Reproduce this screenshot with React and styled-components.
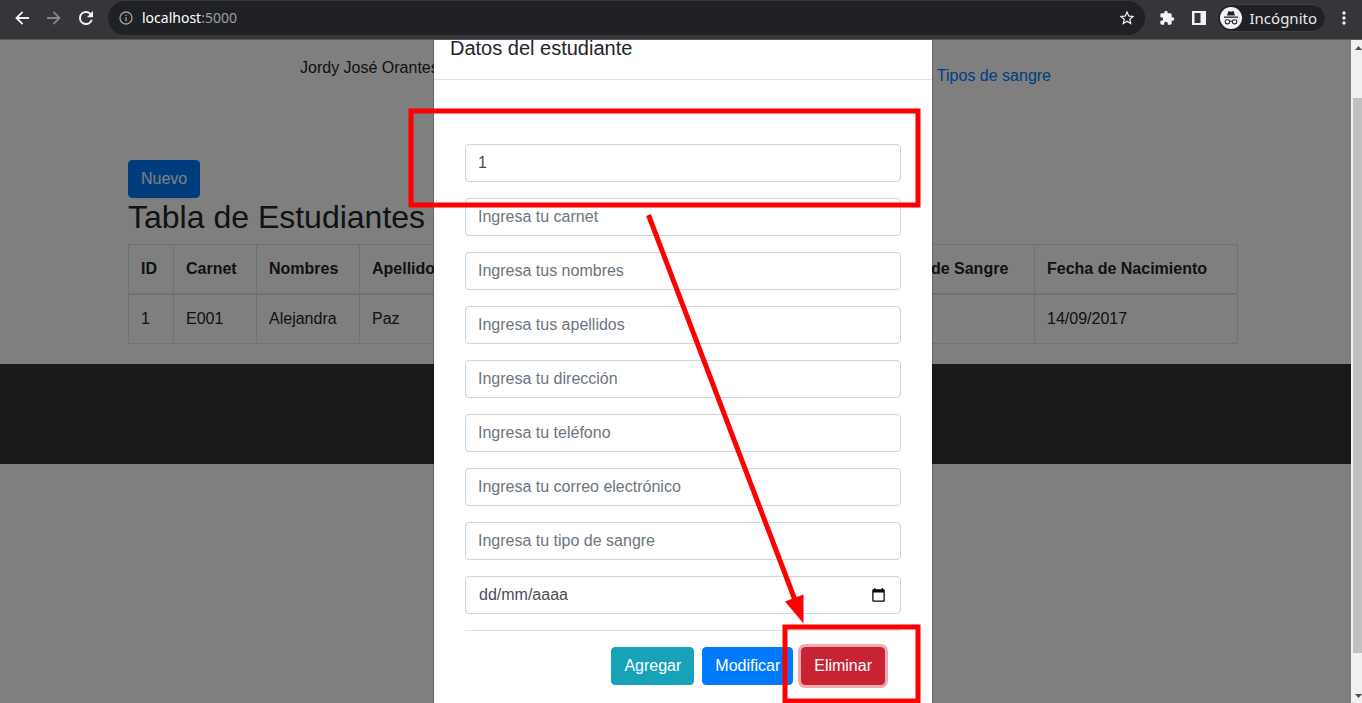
import React from "react";
import styled, { createGlobalStyle, css } from "styled-components";

const GlobalStyle = createGlobalStyle`
  *, *::before, *::after { box-sizing: border-box; }
  body {
    margin: 0;
    font: 400 16px/24px "Liberation Sans", Arial, sans-serif;
    color: #212529;
    background: #fff;
  }
  button, input { font: inherit; margin: 0; }
`;

const Browser = styled.div`
  display: flex;
  flex-direction: column;
  height: 100vh;
  overflow: hidden;
`;

const Toolbar = styled.header`
  display: flex;
  align-items: center;
  flex: none;
  height: 40px;
  padding: 0 8px 4px 12px;
  gap: 8px;
  background: #35363a;
  border-bottom: 1px solid #5b5c60;
  font-family: "Noto Sans", sans-serif;
`;

const IconButton = styled.button`
  display: flex;
  align-items: center;
  justify-content: center;
  flex: none;
  width: 20px;
  height: 20px;
  padding: 0;
  border: 0;
  background: none;
  color: ${(p) => (p.$dim ? "#85868a" : "#f1f3f4")};
`;

const ActionGroup = styled.div`
  display: flex;
  align-items: center;
  gap: 12px;
`;

const AddressBar = styled.div`
  display: flex;
  flex: 1;
  align-items: center;
  gap: 6px;
  height: 34px;
  margin: 0 4px;
  padding: 0 8px;
  border-radius: 17px;
  background: #202124;
  font-size: 14px;
`;

const SiteInfoButton = styled(IconButton)`
  color: #9aa0a6;
`;

const Url = styled.span`
  flex: 1;
  color: #fff;
  span { color: #9aa0a6; }
`;

const Profile = styled.button`
  display: flex;
  align-items: center;
  gap: 8px;
  height: 28px;
  padding: 0 8px 0 2px;
  border: 1px solid #3f4044;
  border-radius: 14px;
  background: #202124;
  color: #e8eaed;
  font-size: 15px;
`;

const Viewport = styled.div`
  position: relative;
  flex: 1;
  min-height: 0;
  margin-right: -4px;
  overflow: hidden;
`;

const Container = styled.div`
  max-width: 1140px;
  margin: 0 auto;
  padding: 0 15px;
`;

const Masthead = styled.div`
  display: flex;
  justify-content: space-between;
  height: 120px;
  padding: 16px 187px 0 172px;
`;

const NavLink = styled.a`
  padding-top: 8px;
  color: #007bff;
  text-decoration: none;
`;

const tones = {
  primary: "#007bff",
  info: "#17a2b8",
  danger: "#c82333",
};

const Button = styled.button`
  display: block;
  height: 38px;
  padding: 0 12px;
  border: 1px solid ${(p) => tones[p.$tone]};
  border-radius: 4px;
  background: ${(p) => tones[p.$tone]};
  color: #fff;
  ${(p) => p.$focused && css`box-shadow: 0 0 0 3px rgba(225, 83, 97, 0.5);`}
`;

const Heading = styled.h2`
  margin: 0 0 8px;
  font-size: 32px;
  line-height: 38px;
  font-weight: 500;
`;

const StudentTable = styled.table`
  width: 100%;
  table-layout: fixed;
  border-collapse: collapse;
  border: 1px solid #dee2e6;
  white-space: nowrap;

  th, td {
    padding: 12px;
    border: 1px solid #dee2e6;
    text-align: left;
    overflow: hidden;
  }
  thead th { border-bottom-width: 2px; }
`;

const Column = styled.col`
  width: ${(p) => (p.$width ? `${p.$width}px` : "auto")};
`;

const PageFooter = styled.footer`
  height: 100px;
  margin-top: 20px;
  background: #333;
`;

const Backdrop = styled.div`
  position: absolute;
  inset: 0;
  display: flex;
  justify-content: center;
  background: rgba(0, 0, 0, 0.5);
`;

const Modal = styled.div`
  position: relative;
  width: 500px;
  min-height: 100%;
  border: 1px solid rgba(0, 0, 0, 0.2);
  border-width: 0 1px;
  background: #fff;
  background-clip: padding-box;
`;

const ModalTitle = styled.h5`
  margin: 0;
  padding: 0 16px 23px;
  border-bottom: 1px solid #dee2e6;
  font-size: 20px;
  line-height: 16px;
  font-weight: 500;
`;

const Form = styled.form`
  display: flex;
  flex-direction: column;
  gap: 16px;
  padding: 64px 31px 16px;
`;

const fieldBox = css`
  width: 100%;
  height: 38px;
  padding: 6px 12px;
  border: 1px solid #ced4da;
  border-radius: 4px;
  background: #fff;
  color: #495057;
`;

const Field = styled.input`
  ${fieldBox}
  &::placeholder { color: #6c757d; opacity: 1; }
`;

const DateField = styled.div`
  ${fieldBox}
  display: flex;
  align-items: center;
  padding: 0 12px;
`;

const DateInput = styled.input`
  flex: 1;
  min-width: 0;
  padding: 0 1px;
  border: 0;
  background: none;
  color: inherit;
  outline: 0;
  &::placeholder { color: #495057; opacity: 1; }
`;

const CalendarButton = styled(IconButton)`
  color: #000;
`;

const Actions = styled.div`
  display: flex;
  justify-content: flex-end;
  gap: 8px;
  padding: 16px 16px 0 0;
  border-top: 1px solid #dee2e6;
`;

const Annotations = styled.svg`
  position: absolute;
  top: 0;
  left: -1px;
  overflow: visible;
  pointer-events: none;
`;

const Scrollbar = styled.div`
  position: absolute;
  inset: 0 0 0 auto;
  display: flex;
  flex-direction: column;
  align-items: center;
  justify-content: space-between;
  width: 15px;
  padding: 6px 0 5px;
  background: #f1f1f1;
`;

const ScrollThumb = styled.div`
  flex: 1;
  align-self: stretch;
  margin: 48px 2px 41px;
  background: #c1c1c1;
`;

const fields = [
  "Ingresa tu carnet",
  "Ingresa tus nombres",
  "Ingresa tus apellidos",
  "Ingresa tu dirección",
  "Ingresa tu teléfono",
  "Ingresa tu correo electrónico",
  "Ingresa tu tipo de sangre",
];

const columns = [
  { title: "ID", width: 45, value: "1" },
  { title: "Carnet", width: 83, value: "E001" },
  { title: "Nombres", width: 103, value: "Alejandra" },
  { title: "Apellidos", width: 104, value: "Paz" },
  { title: "Dirección", value: "" },
  { title: "Teléfono", value: "" },
  { title: "Correo", value: "" },
  { title: "Tipo de Sangre", width: 154, value: "" },
  { title: "Fecha de Nacimiento", width: 203, value: "14/09/2017" },
];

const Icon = ({ path, size = 20 }) => (
  <svg width={size} height={size} viewBox="0 0 24 24" fill="currentColor" aria-hidden="true">
    <path d={path} />
  </svg>
);

const icons = {
  back: "M20.500 10.800H8.200l5.200-5.300L12 3.800 3.800 12l8.200 8.200 1.500-1.600-5.300-5.300h12.300z",
  forward: "M12 3.800l-1.500 1.700 5.200 5.300H3.500v2.500h12.200l-5.200 5.300L12 20.200l8.200-8.200z",
  reload:
    "M17.900 6.100A8.400 8.400 0 0 0 12 3.600a8.400 8.400 0 1 0 8.100 10.600h-2.500A6 6 0 1 1 12 6c1.660 0 3.140.69 4.220 1.780L13 11h7.400V3.600z",
  info: "M11 7h2v2h-2zm0 4h2v6h-2zm1-9a10 10 0 1 0 0 20 10 10 0 0 0 0-20zm0 18a8 8 0 1 1 0-16 8 8 0 0 1 0 16z",
  star: "M22 9.240l-7.190-.62L12 2 9.190 8.630 2 9.240l5.460 4.730L5.820 21 12 17.270 18.180 21l-1.630-7.030L22 9.240zM12 15.400l-3.760 2.270 1-4.280-3.320-2.880 4.380-.38L12 6.100l1.710 4.040 4.380.38-3.320 2.880 1 4.280L12 15.400z",
  puzzle:
    "M20.500 11H19V7c0-1.100-.9-2-2-2h-4V3.500a2.500 2.500 0 0 0-5 0V5H4c-1.100 0-2 .9-2 2v3.800h1.500a2.700 2.700 0 0 1 0 5.400H2V20c0 1.100.9 2 2 2h3.800v-1.500a2.700 2.700 0 0 1 5.400 0V22H17c1.100 0 2-.9 2-2v-4h1.500a2.500 2.500 0 0 0 0-5z",
  panel: "M3.600 3.600h16.800v16.800H3.600zM6.600 6v12h7.200V6z",
  more: "M12 8a2 2 0 1 0 0-4 2 2 0 0 0 0 4zm0 2a2 2 0 1 0 0 4 2 2 0 0 0 0-4zm0 6a2 2 0 1 0 0 4 2 2 0 0 0 0-4z",
  calendar:
    "M20 2h-1V0h-2v2H7V0H5v2H4c-1.100 0-2 .9-2 2v16c0 1.100.9 2 2 2h16c1.100 0 2-.9 2-2V4c0-1.100-.9-2-2-2zm0 18H4V7h16v13z",
};

const IncognitoMark = () => (
  <svg width="22" height="22" viewBox="0 0 22 22" aria-hidden="true">
    <circle cx="11" cy="11" r="11" fill="#f1f3f4" />
    <path d="M7 8.500 8.300 4.500Q8.600 3.900 9.300 4.200L11 4.700l1.700-.5q.7-.3 1 .3L15 8.500zM4 9.500h14v1.200H4z" fill="#202124" />
    <g fill="none" stroke="#202124" strokeWidth="1.100">
      <rect x="5.200" y="12.700" width="4.400" height="4.200" rx="1.800" />
      <rect x="12.400" y="12.700" width="4.400" height="4.200" rx="1.800" />
      <path d="M9.600 14.200h2.800" />
    </g>
  </svg>
);

export default function App() {
  return (
    <Browser>
      <GlobalStyle />
      <Toolbar>
        <ActionGroup>
          <IconButton aria-label="Atrás"><Icon path={icons.back} /></IconButton>
          <IconButton aria-label="Adelante" $dim><Icon path={icons.forward} /></IconButton>
          <IconButton aria-label="Recargar"><Icon path={icons.reload} /></IconButton>
        </ActionGroup>
        <AddressBar>
          <SiteInfoButton aria-label="Información del sitio"><Icon path={icons.info} size={16} /></SiteInfoButton>
          <Url>localhost<span>:5000</span></Url>
          <IconButton aria-label="Favorito"><Icon path={icons.star} size={18} /></IconButton>
        </AddressBar>
        <ActionGroup>
          <IconButton aria-label="Extensiones"><Icon path={icons.puzzle} size={16} /></IconButton>
          <IconButton aria-label="Panel lateral"><Icon path={icons.panel} /></IconButton>
        </ActionGroup>
        <Profile><IncognitoMark />Incógnito</Profile>
        <IconButton aria-label="Menú"><Icon path={icons.more} /></IconButton>
      </Toolbar>

      <Viewport>
        <Container>
          <Masthead>
            <span>Jordy José Orantes</span>
            <NavLink href="#tipos">Tipos de sangre</NavLink>
          </Masthead>
          <Button type="button" $tone="primary">Nuevo</Button>
          <Heading>Tabla de Estudiantes</Heading>
          <StudentTable>
            <colgroup>
              {columns.map((c) => <Column key={c.title} $width={c.width} />)}
            </colgroup>
            <thead>
              <tr>{columns.map((c) => <th key={c.title} scope="col">{c.title}</th>)}</tr>
            </thead>
            <tbody>
              <tr>{columns.map((c) => <td key={c.title}>{c.value}</td>)}</tr>
            </tbody>
          </StudentTable>
        </Container>
        <PageFooter />

        <Backdrop>
          <Modal role="dialog" aria-labelledby="modal-title">
            <ModalTitle id="modal-title">Datos del estudiante</ModalTitle>
            <Form onSubmit={(e) => e.preventDefault()}>
              <Field aria-label="ID" defaultValue="1" />
              {fields.map((text) => (
                <Field key={text} aria-label={text} placeholder={text} />
              ))}
              <DateField>
                <DateInput aria-label="Fecha de nacimiento" placeholder="dd/mm/aaaa" />
                <CalendarButton type="button" aria-label="Abrir calendario">
                  <Icon path={icons.calendar} size={15} />
                </CalendarButton>
              </DateField>
              <Actions>
                <Button type="button" $tone="info">Agregar</Button>
                <Button type="button" $tone="primary">Modificar</Button>
                <Button type="button" $tone="danger" $focused>Eliminar</Button>
              </Actions>
            </Form>
            <Annotations width="500" height="663" viewBox="433 40 500 663" aria-hidden="true">
              <g fill="none" stroke="#f00" strokeWidth="5">
                <rect x="411" y="111" width="507" height="94" />
                <rect x="785" y="627" width="133" height="74" />
                <path d="M648.500 215 795 600" />
              </g>
              <path d="M785 601.500 803.500 594.500V623.500z" fill="#f00" />
            </Annotations>
          </Modal>
        </Backdrop>

        <Scrollbar aria-hidden="true">
          <svg width="7" height="4" viewBox="0 0 7 4"><path d="M0 4 3.500 0 7 4z" fill="#505050" /></svg>
          <ScrollThumb />
          <svg width="7" height="4" viewBox="0 0 7 4"><path d="M0 0h7L3.500 4z" fill="#505050" /></svg>
        </Scrollbar>
      </Viewport>
    </Browser>
  );
}
